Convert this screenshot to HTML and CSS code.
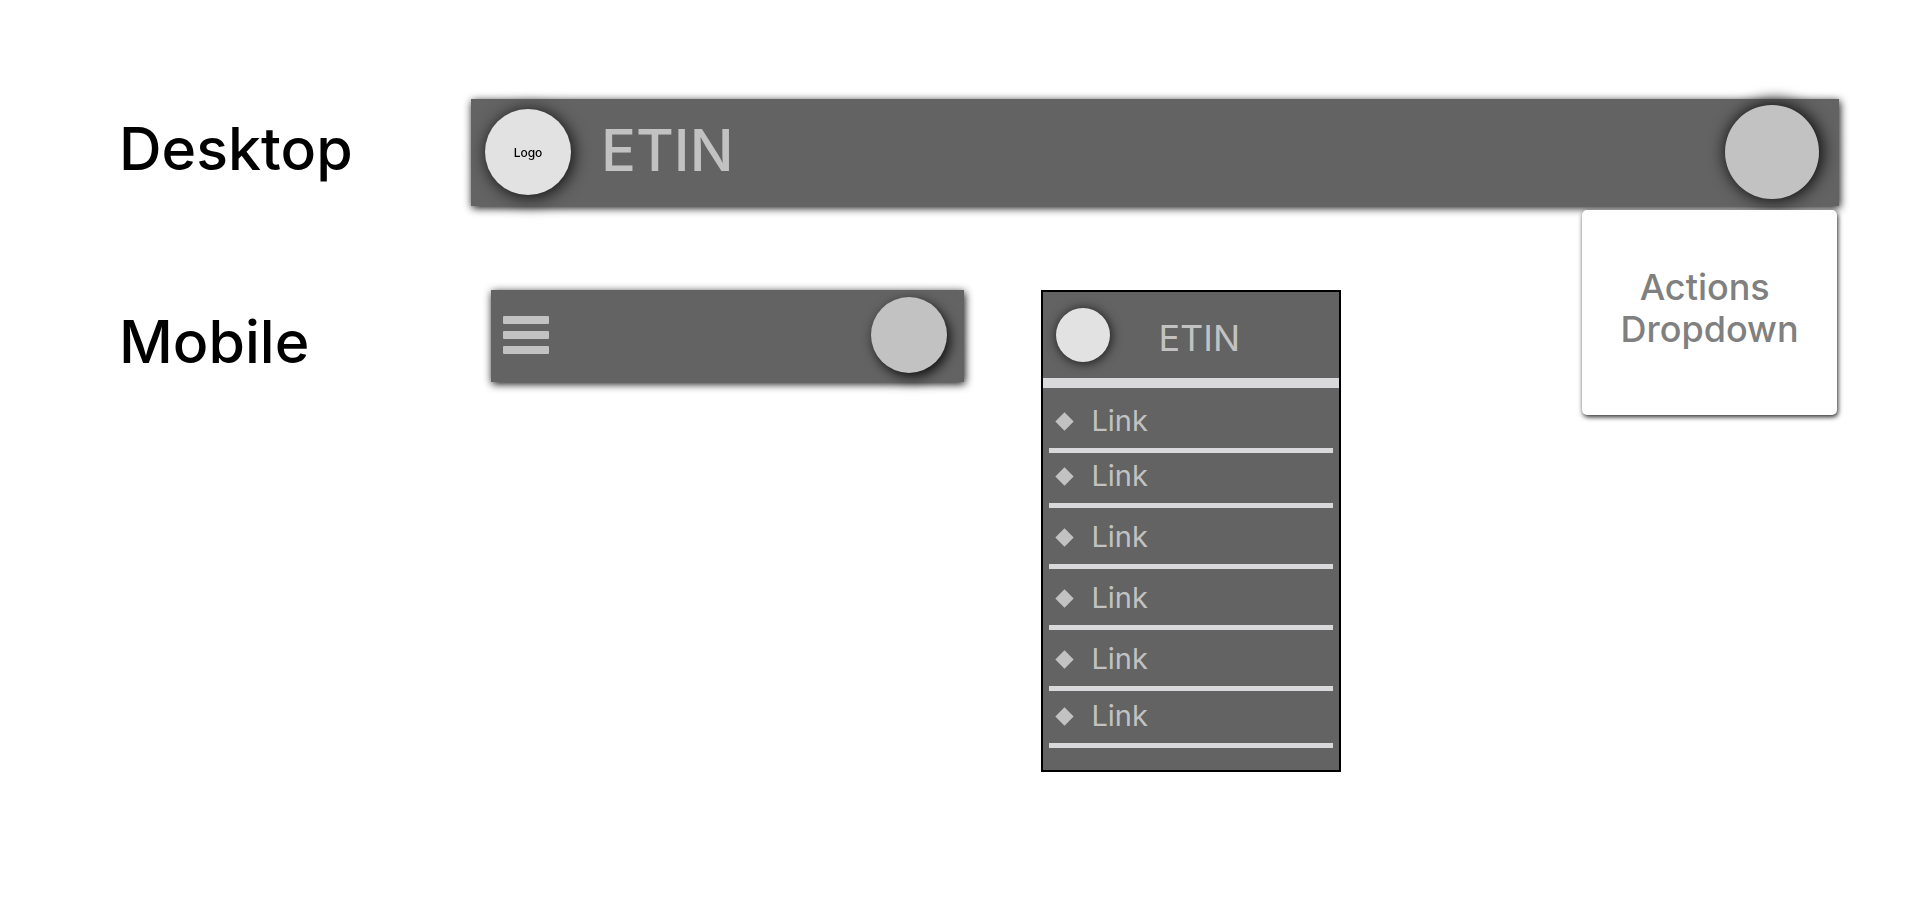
FILE: index.html
```html
<!DOCTYPE html>
<html lang="en">
<head>
<meta charset="utf-8">
<meta name="viewport" content="width=device-width, initial-scale=1">
<title>ETIN navigation</title>
<link rel="stylesheet" href="styles.css">
</head>
<body>
<main class="board">
  <section class="row">
    <h2 class="label label-desktop">Desktop</h2>
    <div class="desktop">
      <header class="bar bar-desktop">
        <a class="logo" href="#">Logo</a>
        <span class="brand">ETIN</span>
        <button class="avatar avatar-large" type="button" aria-label="Account"></button>
      </header>
      <div class="dropdown"><span>Actions </span><span>Dropdown</span></div>
    </div>
  </section>
  <section class="row">
    <h2 class="label label-mobile">Mobile</h2>
    <div class="mobile">
      <header class="bar bar-mobile">
        <button class="menu" type="button" aria-label="Menu"><i></i><i></i><i></i></button>
        <button class="avatar avatar-small" type="button" aria-label="Account"></button>
      </header>
      <nav class="drawer">
        <div class="drawer-head">
          <span class="drawer-logo"></span>
          <span class="drawer-brand">ETIN</span>
        </div>
        <ul class="links">
          <li class="link-first"><a href="#">Link</a></li>
          <li class="link-second"><a href="#">Link</a></li>
          <li><a href="#">Link</a></li>
          <li><a href="#">Link</a></li>
          <li><a href="#">Link</a></li>
          <li class="link-last"><a href="#">Link</a></li>
        </ul>
      </nav>
    </div>
  </section>
</main>
</body>
</html>
```
FILE: styles.css
```css
* {
  box-sizing: border-box;
}

body {
  margin: 0;
  background: #fff;
  font-family: Inter, "Open Sans", sans-serif;
}

a {
  color: inherit;
  text-decoration: none;
}

button {
  padding: 0;
  border: 0;
  cursor: pointer;
}

.board {
  display: flex;
  flex-direction: column;
  gap: 84px;
  padding: 99px 81px 99px 119px;
}

.row {
  display: grid;
  grid-template-columns: 352px minmax(0, 1fr);
  align-items: start;
}

.label {
  margin: 0;
  color: #000;
  font-size: 59px;
  font-weight: 500;
  line-height: 68px;
}

.label-desktop {
  padding-top: 16px;
}

.label-mobile {
  padding-top: 18px;
}

.desktop {
  position: relative;
}

.bar {
  display: flex;
  align-items: center;
  background: #636363;
  filter: drop-shadow(1px 2px 4px rgba(0, 0, 0, 0.95));
}

.bar-desktop {
  padding: 6px 20px 7px 14px;
}

.logo {
  display: grid;
  place-items: center;
  width: 86px;
  height: 86px;
  border-radius: 50%;
  background: #e2e2e2;
  color: #000;
  font-size: 12px;
  font-weight: 500;
  box-shadow: 2px 2px 16px 1px rgba(0, 0, 0, 0.8);
}

.brand {
  margin-left: 30px;
  padding-bottom: 5px;
  color: #c2c2c2;
  font-size: 58px;
  font-weight: 500;
  line-height: 68px;
}

.avatar {
  margin-left: auto;
  border-radius: 50%;
  background: #c2c2c2;
}

.avatar-large {
  width: 94px;
  height: 94px;
  box-shadow: 2px 0 16px 2px rgba(0, 0, 0, 0.85);
}

.avatar-small {
  width: 76px;
  height: 76px;
  box-shadow: 3px 4px 12px rgba(0, 0, 0, 0.85);
}

.dropdown {
  position: absolute;
  top: calc(100% + 4px);
  right: 2px;
  display: flex;
  flex-direction: column;
  align-items: center;
  width: 255px;
  padding: 56px 0 65px;
  border-radius: 5px;
  background: #fff;
  color: #808080;
  font-size: 36px;
  font-weight: 500;
  line-height: 42px;
  white-space: pre;
  box-shadow: 1px 2px 5px rgba(0, 0, 0, 0.85);
}

.mobile {
  display: grid;
  grid-template-columns: minmax(0, 473fr) minmax(0, 299fr) minmax(0, 421fr);
  column-gap: 77px;
  align-items: start;
  padding-left: 20px;
}

.bar-mobile {
  padding: 7px 17px 9px 12px;
}

.menu {
  display: flex;
  flex-direction: column;
  gap: 7px;
  width: 46px;
  background: none;
}

.menu i {
  height: 8px;
  border-radius: 1px;
  background: #c2c2c2;
}

.drawer {
  padding-bottom: 22px;
  border: 2px solid #000;
  background: #636363;
  color: #c2c2c2;
}

.drawer-head {
  display: flex;
  align-items: center;
  padding: 16px 13px;
  border-bottom: 10px solid #d9d9dc;
}

.drawer-logo {
  width: 54px;
  height: 54px;
  border-radius: 50%;
  background: #e2e2e2;
  box-shadow: 1px 1px 12px rgba(0, 0, 0, 0.8);
}

.drawer-brand {
  margin-left: 48px;
  padding-top: 5px;
  font-size: 36px;
  font-weight: 400;
  line-height: 42px;
}

.links {
  margin: 0;
  padding: 0 6px;
  list-style: none;
}

.links li {
  padding: 12px 0 10px;
  border-bottom: 5px solid #d9d9dc;
}

.links .link-first {
  padding-top: 16px;
}

.links .link-second {
  padding-top: 6px;
}

.links .link-last {
  padding-top: 8px;
}

.links a {
  display: flex;
  align-items: center;
  gap: 20px;
  padding-left: 9px;
  font-size: 29px;
  line-height: 34px;
}

.links a::before {
  content: "";
  width: 13px;
  height: 13px;
  background: #c2c2c2;
  transform: rotate(45deg);
}
```
